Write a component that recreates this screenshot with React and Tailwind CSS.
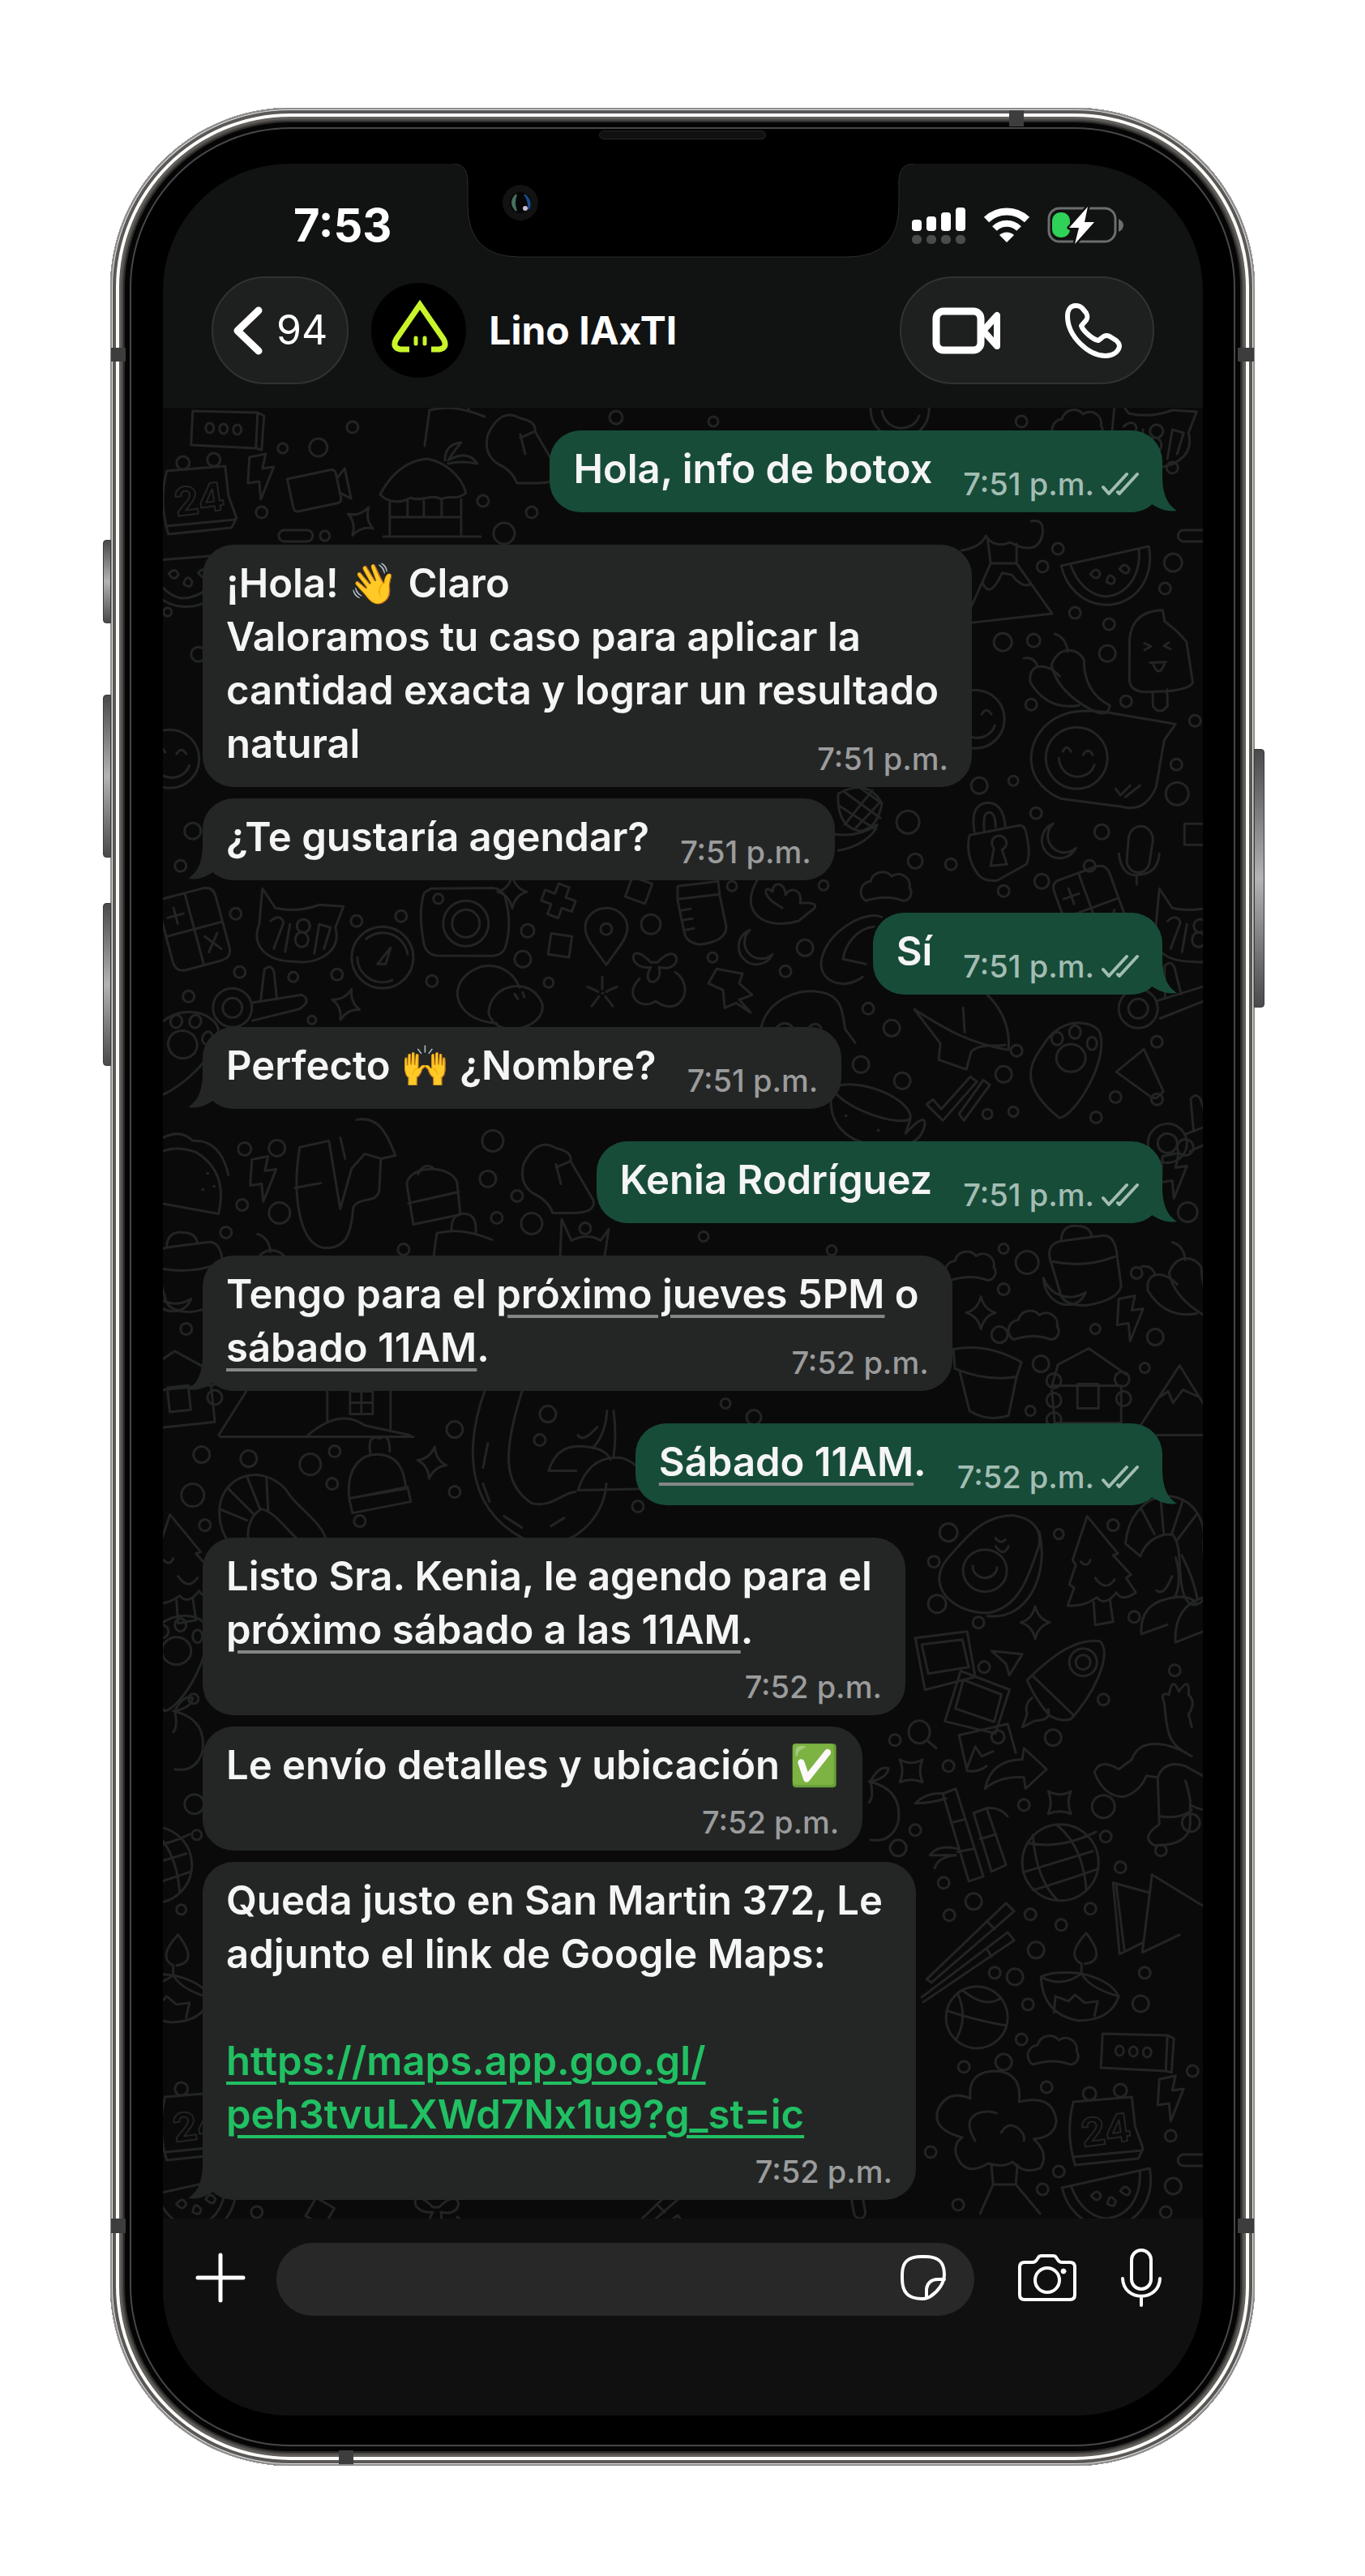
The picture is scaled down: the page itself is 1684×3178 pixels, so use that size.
const OUTLINE = { fill: "none", stroke: "currentColor", strokeLinecap: "round", strokeLinejoin: "round" };

/* ---------- Chat wallpaper ---------- */

const DOODLES = {
  bolt: "M-12 -24 L8 -28 L4 -10 L18 -12 L2 28 L0 6 L-14 8 Z",
  star: "M0 -20 Q4 -4 18 0 Q4 4 0 20 Q-4 4 -18 0 Q-4 -4 0 -20 Z",
  star4: "M-14 -14 Q0 -6 14 -14 Q8 0 14 14 Q0 8 -14 14 Q-8 0 -14 -14 Z",
  capsule: "M-14 -7 H14 A7 7 0 0 1 14 7 H-14 A7 7 0 0 1 -14 -7 Z",
  cloud: "M-26 16 A13 13 0 0 1 -20 -8 A15 15 0 0 1 6 -14 A14 14 0 0 1 28 0 A10 10 0 0 1 20 16 Q0 8 -26 16 Z",
  moon: "M-6 -22 A22 22 0 1 0 22 8 A18 18 0 0 1 -6 -22 Z",
  square: "M-13 -13 H13 V13 H-13 Z",
  cross: "M-7 -20 H7 V-7 H20 V7 H7 V20 H-7 V7 H-20 V-7 H-7 Z",
  flower: "M0 -5 V-20 M5 -2 L18 -8 M4 4 L13 16 M-4 4 L-13 16 M-5 -2 L-18 -8 M0 0 H1",
  pin: "M0 36 C-14 16 -26 4 -26 -10 A26 24 0 0 1 26 -10 C26 4 14 16 0 36 Z M-7 -8 A7 7 0 1 0 7 -8 A7 7 0 1 0 -7 -8",
  ticket: "M-42 -22 L38 -20 L36 24 L-44 20 Z M38 -20 L46 -16 L43 26 L36 24 M-26 -1 A5 6 0 1 0 -16 -1 A5 6 0 1 0 -26 -1 M-9 0 A5 6 0 1 0 1 0 A5 6 0 1 0 -9 0 M8 1 A5 6 0 1 0 18 1 A5 6 0 1 0 8 1",
  calendar: "M-40 -34 L32 -40 L36 -4 L46 24 L40 36 L-38 44 Q-50 4 -40 -34 Z M-40 34 L44 26 M-28 -44 A8 8 0 1 0 -12 -44 A8 8 0 1 0 -28 -44 M10 -48 A8 8 0 1 0 26 -48 A8 8 0 1 0 10 -48",
  camcorder: "M-36 -20 H18 Q24 -20 24 -14 V16 Q24 22 18 22 H-30 Q-36 22 -36 16 Z M24 -8 L36 -18 V20 L24 10",
  hut: "M-54 -2 C-40 -28 -20 -44 4 -46 C26 -42 46 -26 52 -4 C40 6 30 -2 22 4 C10 -4 -4 8 -16 2 C-28 8 -42 10 -54 -2 Z M-42 8 V50 H46 V4 M-42 26 H46 M-20 6 V26 M0 6 V26 M22 6 V26 M-50 50 H70 M26 -44 Q26 -64 46 -66 Q36 -54 30 -44 Q54 -58 66 -40 Q46 -44 30 -40",
  melon: "M-54 -12 L54 -36 C62 4 36 38 -2 36 C-28 34 -48 14 -54 -12 Z M-42 -12 C-34 10 -18 24 0 26 C26 24 44 2 42 -32 M-18 -2 Q-10 -12 -6 -2 Q-10 8 -18 -2 M2 8 Q4 -6 12 4 Q12 14 2 8 M18 -8 Q24 -18 30 -8 Q28 2 18 -8",
  smiley: "M-36 0 A36 36 0 1 0 36 0 A36 36 0 1 0 -36 0 M-16 -8 Q-11 -18 -6 -8 M8 -6 Q14 -16 20 -6 M-22 2 C-18 28 16 30 24 8",
  calculator: "M-26 -46 H22 Q36 -46 36 -32 V32 Q36 46 22 46 H-22 Q-36 46 -36 32 V-34 Q-36 -46 -26 -46 Z M0 -46 V46 M-36 0 H36 M-18 -32 V-12 M-28 -22 H-8 M10 12 L26 32 M26 12 L10 32",
  cat: "M-44 -44 L-28 -20 Q0 -14 26 -24 L56 -22 L46 4 C54 34 24 50 -4 46 C-40 46 -58 26 -48 0 Z M-34 -4 Q-22 -14 -18 -2 L-30 30 M-16 34 L-10 0 M6 -6 A8 8 0 1 0 7 -6 M4 10 A8 9 0 1 0 5 10 M20 36 L26 0 L40 4 L32 30",
  stopwatch: "M-38 0 A38 38 0 1 0 38 0 A38 38 0 1 0 -38 0 M-31 0 A31 31 0 0 0 12 28 M31 -4 A31 31 0 0 0 -20 -23 M-6 8 L10 -12 L4 8 Z",
  camera: "M-46 -38 L30 -44 Q42 -44 46 -34 Q58 0 50 30 Q46 40 30 40 L-32 44 Q-46 44 -50 30 Q-60 -8 -54 -32 Z M-28 2 A28 28 0 1 0 28 2 A28 28 0 1 0 -28 2 M-17 2 A17 17 0 1 0 17 2 A17 17 0 1 0 -17 2 M-42 -26 A6 6 0 1 0 -30 -26 A6 6 0 1 0 -42 -26",
  plane: "M-24 0 A24 24 0 1 0 24 0 A24 24 0 1 0 -24 0 M-12 0 A12 12 0 1 0 12 0 A12 12 0 1 0 -12 0 M24 -8 L84 -22 Q98 -16 82 -4 L26 14 M34 -10 L36 -50 Q44 -58 48 -48 L54 -14",
  stones: "M-2 34 C-60 30 -66 -22 -20 -36 C4 -40 20 -26 26 -10 M-12 22 C-12 -14 40 -26 54 10 C60 40 -2 56 -12 22 Z M20 -2 L24 4 M30 -4 L32 2",
  bow: "M-6 -10 C-34 -40 -36 0 -6 -4 C-20 20 10 20 4 -4 C36 4 30 -40 2 -10 Z M-20 10 C-40 30 -20 50 0 38 C30 60 50 20 24 2",
  paw: "M-30 -30 C-48 -6 -60 20 -10 60 C10 56 50 -10 40 -44 C34 -62 -10 -66 -30 -30 Z M-14 -14 A18 17 0 1 0 22 -14 A18 17 0 1 0 -14 -14 M-20 -38 A7 8 0 1 0 -6 -38 A7 8 0 1 0 -20 -38 M2 -46 A7 8 0 1 0 16 -46 A7 8 0 1 0 2 -46 M24 -32 A6 8 0 1 0 36 -32 A6 8 0 1 0 24 -32",
  speech: "M-50 -52 Q-30 -62 10 -56 L92 -42 L78 -22 L68 36 Q54 68 26 60 L-50 50 C-104 26 -92 -34 -50 -52 Z M-68 0 A38 38 0 1 0 8 0 A38 38 0 1 0 -68 0 M-47 -8 Q-42 -18 -37 -8 M-22 -4 Q-16 -14 -10 -4 M-52 0 C-50 28 -14 30 -8 8 M18 38 L24 46 L36 34 M30 48 L48 34",
  lock: "M-34 -14 L28 -26 Q34 -26 36 -16 Q42 10 36 22 L0 42 Q-16 44 -24 34 Q-40 12 -34 -14 Z M-28 -18 Q-34 -52 -12 -54 Q8 -54 10 -24 M-16 -20 Q-18 -42 -10 -42 Q-2 -42 -2 -24 M-4 2 A9 9 0 1 1 6 4 L12 22 L-8 24 Z",
  mic: "M-14 -14 A15 17 0 0 1 16 -12 L12 14 A13 14 0 0 1 -16 10 Z M-26 4 Q-22 34 0 30 Q22 28 24 4 M-4 30 V42",
  berry: "M-26 -30 Q10 -50 28 -18 Q22 14 0 16 Q-28 10 -26 -30 Z M-26 -16 L20 14 M-18 -32 L26 0 M0 -38 L28 -18 M16 -34 L-18 8 M26 -20 L-6 14 M-26 40 C0 36 20 20 22 8 Q0 24 -30 20",
  jar: "M-28 -34 L22 -40 L24 -22 L32 16 Q32 34 0 38 Q-18 36 -20 22 L-28 -16 Z M-28 -18 L24 -24 M-24 -4 L-12 -6 M-22 8 L-10 6 M-18 20 L-8 18",
  shell: "M-30 -28 C-56 14 -20 36 20 24 L40 8 Q44 0 22 2 C26 -14 10 -20 4 -8 C4 -24 -12 -26 -12 -12 C-20 -20 -26 -12 -12 0 L0 8",
  bulb: "M40 -44 C20 -52 -20 -30 -32 0 C-46 32 -10 50 16 30 M30 -32 C8 -30 -6 -8 -8 8 L20 14",
  pushpin: "M-18 -26 L14 -20 L10 -8 L26 6 L10 12 L24 28 L6 16 L-8 22 L-10 0 L-28 -8 Z",
  shark: "M-60 -22 C-20 4 10 20 56 28 C58 4 50 -20 30 -40 M-60 -22 L-28 20 L-30 40 L4 52 L10 30 C20 20 36 24 52 22 M0 -24 L2 6",
  ticks: "M-36 6 L-28 0 L-18 12 L18 -28 L26 -22 L-16 26 Z M4 18 L34 -24 L42 -18 L10 26 Z",
  tube: "M-34 -6 L0 -34 L24 18 L16 26 L10 26 Z M20 22 A7 7 0 1 0 22 24",
  cup: "M-60 -34 C-30 -50 40 -20 36 4 C20 14 -50 -10 -60 -34 Z M-60 -34 C-70 10 -40 36 0 36 M36 4 L30 22 Q54 -4 54 10 Q50 34 24 36 M-44 0 H-43 M-4 18 H-3",
  head: "M-56 28 C-60 -10 -10 -38 26 -24 C46 -16 44 4 48 20 L60 36 M-36 16 Q-26 8 -18 16 M2 18 Q12 8 18 18",
  backpack: "M-44 -20 Q-48 -40 -26 -42 L20 -48 Q34 -50 38 -30 L44 14 Q40 32 0 38 Q-30 38 -32 20 Z M-40 -16 Q0 -8 36 -22 M-30 -44 Q-28 -62 -10 -60 Q6 -60 8 -46 M-52 4 C-50 40 -10 48 0 22 M-52 4 C-44 26 -20 34 0 22",
  pot: "M-42 -42 Q0 -50 42 -26 L36 -8 Q0 -2 -40 -18 Z M-34 -14 L-22 34 Q0 48 26 40 L36 -8",
  cabin: "M-46 -10 L-38 -38 L0 -58 L46 -26 M-46 -12 H40 V34 H-42 Z M-52 -18 A9 9 0 1 0 -34 -18 A9 9 0 1 0 -52 -18 M-52 6 A9 9 0 1 0 -34 6 A9 9 0 1 0 -52 6 M-52 30 A9 9 0 1 0 -34 30 A9 9 0 1 0 -52 30 M32 -20 A9 9 0 1 0 50 -20 A9 9 0 1 0 32 -20 M34 4 A9 9 0 1 0 52 4 A9 9 0 1 0 34 4 M-14 -14 H12 V16 H-14 Z",
  peak: "M-56 48 L0 -38 L46 36 M-26 2 L-14 -6 L-8 8 L4 -8 L22 0 M-90 48 H60",
  volcano: "M-58 54 L-24 -22 H8 L52 40 L-56 52 M-34 2 Q-26 20 -14 -2 L-10 -10 L2 -8 Q14 8 24 4 M-24 -22 L-28 -54 M8 -22 V-46 M-60 -38 Q-36 -42 -30 -56 Q-20 -40 0 -48 Q34 -30 40 -58 Q42 -78 26 -74",
  popsicle: "M-34 -20 Q-30 -54 8 -54 L10 -40 Q26 -28 36 -14 L42 36 Q40 44 10 46 L-18 46 Q-36 44 -36 30 Z M-8 46 V64 Q0 76 10 64 V44 M-16 -14 L-8 -10 L-16 -6 M14 -14 L8 -10 L16 -6 M-10 10 H10 M-6 12 Q0 30 8 12",
  pepper: "M-16 -38 Q-2 -34 0 -16 M-20 0 C-10 -26 14 -20 20 -6 C20 30 40 44 52 50 Q50 66 30 56 C0 40 -16 20 -20 0 Z M-54 -8 Q-42 -10 -38 0 M-46 22 C-50 -2 -26 -4 -10 14 M-46 22 C-30 48 -8 54 14 50",
  taco: "M-60 -14 Q-40 -44 0 -30 Q40 -6 28 46 L-60 30 M-44 -46 Q-20 -60 -4 -44 Q30 -46 40 -2 M14 -4 H15 M8 16 H9 M22 12 H23",
  bottle: "M-60 -50 C-70 10 -60 70 -30 74 C0 76 4 50 6 24 C14 10 34 20 38 4 L40 -36 L20 -42 L4 -24 L-10 26 L-24 -58 Z M-66 0 L-34 -6 M-10 -62 L-4 -36 M10 -84 C40 -90 50 -60 58 -40 L40 -36",
  cake: "M-34 -16 C-30 -40 20 -40 28 -18 L32 22 L-26 34 Z M-32 8 L30 -6 M-20 -28 Q-14 -42 -2 -36",
  shoe: "M-40 -24 Q-24 -58 0 -44 Q20 -40 18 -28 L46 20 Q50 36 20 36 L-4 36 Q-10 20 -28 12 Q-46 0 -40 -24 Z M0 -24 L6 0 M18 -28 L0 -20",
  bag: "M-36 30 L-30 -14 Q0 -22 38 -6 M-12 -18 Q-12 -40 6 -38 Q20 -36 18 -14",
  ears: "M-26 24 L-24 -26 L-12 0 Q8 -10 24 0 L34 -14 L28 26",
  house: "M-130 30 L-96 -24 M-128 32 H110 M-20 30 Q20 -4 50 18 L106 30 M4 -24 V12 M82 -24 V22 M32 -24 H60 V4 H32 Z M46 -24 V4 M32 -10 H60",
  shrimp: "M-48 0 C-50 -44 0 -66 34 -30 C44 -10 80 10 84 34 Q80 52 62 42 C40 30 26 0 4 -6 C-8 0 -18 20 -10 40 L-34 40 Q-48 20 -48 0 Z M-48 -6 L-14 8 M-38 -32 L-6 0 M-14 -46 L2 -6 M10 -44 L12 -4",
  beanie: "M-38 22 C-42 -20 -20 -34 0 -32 C24 -30 30 -10 32 10 Z M-38 22 L34 8 L38 26 L-34 40 Z M-12 -34 Q-16 -58 0 -52 Q12 -60 12 -36",
  road: "M-30 -100 C-60 -20 -54 60 30 94 C80 100 116 60 118 20 M16 -100 C-10 -20 -10 20 26 44 C50 50 66 30 80 30 M-34 0 L-28 -30 M-34 20 L-26 42 M-8 60 L14 74 M50 72 L66 62",
  mushroom: "M-50 14 Q-40 -20 -6 -16 Q20 -14 26 0 M-50 14 H-16 M-14 38 Q0 -6 40 -2 Q66 6 76 36 Z M10 -40 Q-8 -20 -14 -30 M22 -60 Q20 -30 4 -14 M30 -60 Q34 -30 30 -4",
  avocado: "M20 -60 C-20 -60 -40 -30 -62 -6 C-90 30 -50 62 -10 60 C30 52 40 10 52 -24 Q56 -54 20 -60 Z M52 -40 C64 10 40 70 -12 64 M-42 8 A27 26 0 1 0 12 8 A27 26 0 1 0 -42 8 M-2 -32 Q4 -24 10 -30 M-2 -22 Q8 -8 14 -22 M-30 2 A15 14 0 1 0 0 4",
  tree: "M-12 -68 L26 -22 L20 -20 L42 4 L36 8 L48 26 Q30 38 24 26 Q10 44 0 32 Q-16 44 -36 42 L-28 20 L-34 16 L-26 -8 L-30 -14 Z M-4 38 L-2 66 L20 62 L16 34 M-20 -12 Q-12 -4 -8 -14 M-2 8 Q10 26 22 10",
  polaroid: "M-34 -32 L30 -40 L40 16 L-22 32 Z M-26 -24 L24 -30 L32 4 L-18 12 Z",
  picture: "M-34 -22 L26 -36 L36 0 M-34 -22 L-24 22 Q-10 24 0 16 M-24 18 L-14 -8 L-6 4 L8 -2 M6 -20 A8 8 0 1 0 22 -20 A8 8 0 1 0 6 -20",
  arrow: "M-38 26 Q-30 -10 8 -10 L10 -24 L38 2 L12 26 L10 12 Q-20 10 -38 26 Z",
  dart: "M-20 -12 L18 -8 L2 18 L-2 4 Z",
  rocket: "M-50 0 C-20 -30 10 -52 40 -48 C56 -30 30 20 4 48 Q-8 52 -22 44 Q-40 24 -50 0 Z M-42 -4 L8 44 M2 -22 A17 17 0 1 0 36 -22 A17 17 0 1 0 2 -22 M10 -22 A9 9 0 1 0 28 -22 A9 9 0 1 0 10 -22 M-44 22 Q-54 30 -50 42 L-56 58 L-40 50 Q-20 50 -24 36",
  lens: "M-14 0 A13 14 0 1 0 12 0 A13 14 0 1 0 -14 0 M8 10 L20 20",
  bamboo: "M-24 -48 L-8 -54 L26 54 L8 60 Z M-14 -12 L2 -16 M-6 24 L14 20 M-24 -48 Q-44 -50 -58 -36 Q-40 -36 -20 -42 M14 -24 L30 -30 L54 40 L36 48 Z M22 8 L42 2 M30 -30 Q46 -32 56 -20 M-6 20 Q-30 14 -40 28 L-8 28 Q-30 30 -34 44",
  globe: "M-47 0 A47 47 0 1 0 47 0 A47 47 0 1 0 -47 0 M-40 -24 Q0 -16 44 -38 M-46 12 L40 -14 M-34 34 Q0 24 46 8 M-34 -34 Q-30 20 -4 46 M-4 -46 Q28 -20 32 34",
  sticks: "M-54 50 L44 -44 L54 -34 L-48 54 Z M-60 72 L46 -8 L54 2 L-58 78 M20 -22 L30 -12 M20 12 L26 22",
  candle: "M-46 -10 Q-30 -18 4 -14 Q40 -6 50 14 Q40 44 0 44 Q-44 36 -46 -10 Z M-46 -10 Q-20 4 4 -14 Q14 4 50 14 M4 -14 V-26 Q-16 -36 10 -64 Q36 -30 8 -26 M-30 34 L-28 14 L-12 20 L-4 12 L8 22 L24 20 L20 38",
  ball: "M-38 0 A38 38 0 1 0 38 0 A38 38 0 1 0 -38 0 M-24 -30 Q-10 0 -26 28 M-36 -8 Q0 4 36 10 M-18 -34 Q10 -10 30 -24",
  dancer: "M-30 -20 C-20 -50 20 -40 44 -24 M-30 -20 L-46 -8 Q-70 -22 -76 -4 Q-64 26 -40 26 Q-20 20 -12 0 L2 2 M2 2 Q10 -20 36 -12 L76 10 M2 2 L4 60 Q-20 76 -2 86 Q40 86 42 60 V30 Q38 10 36 6 M4 50 Q30 54 44 42 M42 36 Q60 46 76 40 M44 -24 C10 -40 14 -60 10 -90 Q4 -104 16 -100 Q20 -124 28 -104 Q42 -124 40 -100 Q50 -90 40 -76 L44 -60",
  books: "M-54 -40 L-46 48 L-18 34 M-54 -40 L-10 -28 M-50 -36 L-40 44 M-6 -50 L-18 46 L28 24 M-6 -50 L56 -12",
  cherry: "M10 -30 Q20 -50 32 -46 Q30 -34 10 -30 Q14 -10 8 -4 M8 -30 Q50 -20 44 20 Q36 46 10 42",
  broccoli: "M-10 52 Q-40 70 -50 40 Q-52 26 -42 20 Q-80 10 -72 -14 Q-60 -40 -32 -28 Q-36 -62 0 -62 Q32 -60 28 -24 Q70 -34 74 0 Q72 20 46 22 Q66 40 54 58 Q34 66 20 50 Q8 58 -10 52 Z M-26 24 Q-42 -2 -22 -10 Q-10 -14 0 -10 M6 14 Q14 0 26 8 Q36 16 34 24 M-6 54 L-4 78 H24 L26 54 M-4 78 L-20 114 M24 78 L54 114",
};

const PLACED = [
  ["ticket", 280, 529], ["bolt", 320, 588], ["camcorder", 394, 603, -12], ["star", 445, 643, 30], ["hut", 523, 612],
  ["calendar", 246, 615], ["capsule", 365, 661], ["melon", 226, 712, 8], ["smiley", 210, 936], ["calculator", 240, 1146, -15],
  ["cat", 368, 1140], ["stopwatch", 472, 1181], ["camera", 575, 1137, 4], ["star", 632, 1100], ["cross", 689, 1111, 20],
  ["pin", 748, 1154], ["square", 691, 1166, 8], ["square", 788, 1098, 20], ["plane", 287, 1243, 4], ["star", 427, 1239, 20],
  ["stones", 615, 1228], ["flower", 743, 1225], ["bow", 809, 1197], ["paw", 217, 1300, 20],
  ["volcano", 1246, 717], ["melon", 1363, 710], ["popsicle", 1428, 807, -2], ["pepper", 1317, 820], ["smiley", 1203, 887],
  ["speech", 1358, 935], ["lock", 1230, 1044], ["moon", 1305, 1038], ["mic", 1406, 1049], ["square", 1474, 1029],
  ["berry", 1060, 1009], ["cloud", 1094, 1095], ["jar", 864, 1127], ["shell", 965, 1112], ["moon", 931, 1169],
  ["bulb", 1048, 1175], ["pushpin", 902, 1221], ["cat", 1474, 1140], ["calculator", 1346, 1120, -20], ["head", 995, 1250],
  ["shark", 1188, 1267], ["paw", 1317, 1319], ["ticks", 1179, 1356], ["tube", 1411, 1328], ["plane", 1404, 1244, -4],
  ["cup", 1087, 1376], ["plane", 1440, 1410, -8], ["bolt", 1446, 1450], ["backpack", 1339, 1572], ["cloud", 1198, 1563],
  ["star", 1210, 1619], ["cloud", 1276, 1636], ["bolt", 1392, 1626], ["pot", 1218, 1706], ["cabin", 1343, 1721],
  ["peak", 1455, 1722], ["pepper", 1462, 1570], ["taco", 242, 1451], ["bolt", 323, 1454], ["bottle", 430, 1465],
  ["cake", 536, 1476], ["shoe", 686, 1460], ["bag", 569, 1535], ["ears", 717, 1530], ["backpack", 236, 1580],
  ["pepper", 334, 1560], ["cabin", 222, 1724, -6], ["house", 400, 1740], ["shrimp", 319, 1867], ["beanie", 469, 1826],
  ["star", 533, 1804, 10], ["road", 630, 1810], ["mushroom", 727, 1800], ["tree", 222, 1936], ["paw", 214, 2050],
  ["cherry", 206, 2140], ["globe", 190, 2300], ["candle", 210, 2450], ["calendar", 244, 2620], ["melon", 236, 2720],
  ["avocado", 1230, 1929], ["tree", 1353, 1938], ["star", 1277, 2001], ["polaroid", 1163, 2052], ["polaroid", 1200, 2105, 28],
  ["picture", 1217, 2162], ["arrow", 1253, 2180], ["dart", 1243, 2048], ["rocket", 1317, 2072], ["lens", 1135, 2136],
  ["star4", 1124, 2184], ["star4", 1307, 2223], ["bamboo", 1187, 2260], ["globe", 1308, 2297], ["sticks", 1197, 2391],
  ["candle", 1330, 2448], ["ball", 1205, 2488], ["dancer", 1426, 2190], ["books", 1427, 2362], ["cherry", 1064, 2227],
  ["mushroom", 1450, 1985, -20], ["shrimp", 1440, 1895, 40], ["broccoli", 1229, 2616], ["cloud", 1300, 2530],
  ["ticket", 1402, 2530], ["calendar", 1364, 2626], ["bolt", 1442, 2588], ["melon", 1364, 2710], ["capsule", 1474, 2664],
  ["capsule", 1474, 661], ["cloud", 1330, 525], ["bag", 560, 520], ["shoe", 642, 560], ["smiley", 1110, 505],
  ["square", 395, 2728, 30], ["bow", 540, 2732], ["sticks", 790, 2740], ["capsule", 1058, 2715, 80], ["cat", 1420, 530],
];

const DOTS = [
  [349, 553, 6], [393, 552, 11], [323, 632, 7], [401, 661, 6], [435, 527, 7], [596, 618, 7], [656, 632, 7], [622, 658, 13],
  [207, 755, 5], [245, 807, 9], [238, 1025, 10], [223, 1068, 7], [291, 1127, 7], [440, 1136, 7], [495, 1130, 7], [651, 1148, 8],
  [803, 1140, 12], [645, 1183, 10], [296, 1199, 7], [362, 1205, 6], [416, 1202, 7], [533, 1210, 7], [677, 1212, 6], [233, 1229, 7],
  [385, 1258, 5], [1120, 1014, 14], [1129, 1062, 9], [1173, 1066, 7], [1278, 1003, 7], [1250, 963, 6], [1208, 969, 10],
  [1451, 943, 7], [1452, 979, 14], [1359, 1026, 9], [1344, 1068, 7], [1285, 1087, 9], [1238, 1099, 7], [1016, 1092, 6],
  [903, 1093, 6], [993, 1169, 10], [879, 1181, 6], [969, 1198, 7], [1071, 1244, 7], [1100, 1268, 10], [1062, 1313, 10],
  [1113, 1333, 10], [1254, 1296, 7], [1238, 1325, 10], [1218, 1374, 6], [1250, 1371, 6], [1376, 1353, 7], [1352, 1378, 7],
  [1427, 1285, 7], [1462, 1415, 10], [1465, 1495, 12], [1267, 1557, 14], [1238, 1590, 7], [1233, 1646, 10], [1351, 1639, 6],
  [1425, 1649, 10], [1402, 1570, 7], [1284, 1682, 10], [1412, 1687, 6], [1271, 1740, 6], [895, 1731, 6], [930, 1748, 9],
  [1238, 1540, 6], [1026, 1542, 6], [868, 1525, 6], [302, 1417, 8], [342, 1416, 10], [299, 1486, 7], [345, 1496, 13],
  [279, 1520, 7], [602, 1454, 10], [608, 1407, 13], [638, 1475, 7], [613, 1502, 7], [656, 1509, 13], [722, 1515, 7],
  [498, 1541, 7], [230, 1639, 7], [249, 1794, 10], [307, 1799, 10], [383, 1806, 13], [413, 1790, 7], [410, 1830, 7],
  [238, 1844, 14], [253, 1881, 7], [561, 1763, 10], [561, 1840, 7], [444, 1876, 7], [676, 1744, 10], [666, 1776, 7],
  [787, 1858, 7], [1305, 677, 7], [1286, 699, 7], [1447, 694, 11], [1437, 726, 7], [1326, 756, 7],
  [1368, 770, 7], [1366, 806, 10], [1237, 792, 11], [1275, 790, 8], [1272, 869, 7], [1389, 865, 7], [1474, 889, 7],
  [1170, 1890, 11], [1152, 1926, 7], [1306, 1892, 6], [1373, 1881, 7], [1156, 1978, 11], [1207, 2001, 7], [1399, 1994, 7],
  [1214, 2056, 7], [1449, 2060, 7], [1361, 2096, 7], [1299, 2143, 10], [1104, 2146, 7], [1170, 2178, 7], [1263, 2226, 7],
  [1361, 2228, 14], [1364, 2265, 7], [1469, 2248, 11], [1432, 2282, 7], [1382, 2303, 7], [1129, 2257, 7], [1108, 2279, 10],
  [1164, 2322, 7], [1201, 2345, 10], [1171, 2362, 7], [1271, 2361, 7], [1309, 2374, 7], [1345, 2354, 7], [1278, 2405, 10],
  [1252, 2438, 10], [1227, 2433, 7], [1268, 2472, 7], [1412, 2433, 7], [1407, 2471, 10], [1260, 2515, 7], [1238, 2543, 10],
  [1189, 2549, 7], [1291, 2574, 7], [1471, 2554, 7], [1444, 2634, 7], [1148, 2654, 7], [1306, 2678, 7], [1286, 2700, 7],
  [1447, 2696, 10], [1438, 2728, 7], [1182, 2719, 7], [239, 2095, 6], [240, 2225, 12], [243, 2263, 6], [224, 2355, 6],
  [317, 2728, 7], [1446, 577, 7], [1260, 520, 7], [880, 520, 6], [760, 515, 8],
];

const CALENDARS = [[246, 615], [1364, 2626], [244, 2620]];

function Wallpaper() {
  return (
    <svg
      viewBox="201 503 1283 2233"
      preserveAspectRatio="xMidYMin slice"
      className="pointer-events-none absolute inset-0 h-full w-full text-[#232424]"
      aria-hidden="true"
      strokeWidth="3"
      {...OUTLINE}
    >
      {PLACED.map(([name, x, y, turn = 0], i) => (
        <path key={i} d={DOODLES[name]} transform={`translate(${x} ${y}) rotate(${turn})`} />
      ))}
      {DOTS.map(([x, y, r], i) => (
        <circle key={i} cx={x} cy={y} r={r} />
      ))}
      {CALENDARS.map(([x, y], i) => (
        <text key={i} x={x} y={y + 18} textAnchor="middle" fontSize="48" fontWeight="700" strokeWidth="2" transform={`rotate(-8 ${x} ${y})`}>
          24
        </text>
      ))}
    </svg>
  );
}

/* ---------- Icons ---------- */

function SignalIcon() {
  return (
    <svg width="68" height="46" viewBox="0 0 68 46" aria-label="Señal" role="img">
      <g fill="#fff">
        <rect x="1" y="16" width="12" height="14" rx="4" />
        <rect x="19" y="12" width="12" height="18" rx="4" />
        <rect x="37" y="7" width="12" height="23" rx="4" />
        <rect x="55" y="1" width="12" height="29" rx="4" />
      </g>
      <g fill="#4a4b4b">
        <rect x="1" y="35" width="12" height="11" rx="5" />
        <rect x="19" y="35" width="12" height="11" rx="5" />
        <rect x="37" y="35" width="12" height="11" rx="5" />
        <rect x="55" y="35" width="12" height="11" rx="5" />
      </g>
    </svg>
  );
}

function WifiIcon() {
  return (
    <svg width="58" height="44" viewBox="0 0 58 44" aria-label="Wi-Fi" role="img">
      <path d="M4 15 A36 36 0 0 1 54 15" fill="none" stroke="#fff" strokeWidth="9" />
      <path d="M14 26 A21 21 0 0 1 44 26" fill="none" stroke="#fff" strokeWidth="8" />
      <path d="M29 43 L20 34 A13 13 0 0 1 38 34 Z" fill="#fff" />
    </svg>
  );
}

function BatteryIcon() {
  return (
    <svg width="95" height="46" viewBox="0 0 95 46" aria-label="Batería cargando" role="img">
      <rect x="2" y="2" width="82" height="41" rx="13" fill="none" stroke="#6c6d6d" strokeWidth="3" />
      <path d="M88 15 Q94 18 94 23 Q94 28 88 31 Z" fill="#6c6d6d" />
      <rect x="6" y="7" width="22" height="31" rx="10" fill="#30d158" />
      <path d="M50 0 L27 26 H39 L34 46 L58 19 H46 Z" fill="#fff" stroke="#111" strokeWidth="5" paintOrder="stroke" strokeLinejoin="round" />
    </svg>
  );
}

function BackIcon() {
  return (
    <svg width="38" height="60" viewBox="0 0 38 60" strokeWidth="9" aria-hidden="true" {...OUTLINE}>
      <path d="M32 5 L6 30 L32 55" />
    </svg>
  );
}

function BrandMark() {
  return (
    <svg viewBox="0 0 117 117" className="size-[117px] shrink-0 rounded-full bg-black text-[#c9f52b]" strokeWidth="7" role="img" aria-label="Lino IAxTI" {...OUTLINE}>
      <path strokeLinecap="butt" strokeLinejoin="miter" d="M47 82 H36 Q25 80 31 69 L60 27 L89 69 Q95 80 84 82 H74" />
      <path d="M55 68 V75 M66 68 V75" strokeWidth="5" />
    </svg>
  );
}

function VideoIcon() {
  return (
    <svg width="86" height="58" viewBox="0 0 86 58" strokeWidth="9" aria-hidden="true" {...OUTLINE}>
      <rect x="5" y="5" width="55" height="48" rx="9" />
      <path d="M63 29 L80 10 V48 Z" strokeWidth="8" />
    </svg>
  );
}

function PhoneIcon() {
  return (
    <svg width="70" height="68" viewBox="0 0 70 68" strokeWidth="6" aria-hidden="true" {...OUTLINE}>
      <path d="M13 3 C7 3 3 8 3 16 C3 41 29 65 50 65 C59 65 66 60 67 53 C67 50 66 49 63 46 L55 41 C51 39 48 40 45 43 L41 46 C34 45 22 34 20 28 L26 21 C28 18 28 16 26 12 L21 6 C19 4 16 3 13 3 Z" />
    </svg>
  );
}

function ReadTicks() {
  return (
    <svg width="46" height="30" viewBox="0 0 46 30" strokeWidth="4" role="img" aria-label="Entregado" {...OUTLINE}>
      <path d="M2 19 L9 27 L31 3 M20 25 L22 27 L44 3" />
    </svg>
  );
}

function PlusIcon() {
  return (
    <svg width="62" height="62" viewBox="0 0 62 62" strokeWidth="5" aria-hidden="true" {...OUTLINE}>
      <path d="M3 31 H59 M31 3 V59" />
    </svg>
  );
}

function StickerIcon() {
  return (
    <svg width="58" height="58" viewBox="0 0 58 58" strokeWidth="4" aria-hidden="true" {...OUTLINE}>
      <path d="M28 55 C10 55 3 47 3 30 V25 C3 10 10 3 26 3 H32 C48 3 55 10 55 25 C55 36 47 46 38 52 Q34 55 28 55 Z M55 31 H47 C38 31 33 37 33 45 V54" />
    </svg>
  );
}

function CameraIcon() {
  return (
    <svg width="72" height="58" viewBox="0 0 72 58" strokeWidth="4" aria-hidden="true" {...OUTLINE}>
      <path d="M8 10 H18 Q21 10 23 7 L25 4 Q26 2 29 2 H43 Q46 2 47 4 L49 7 Q51 10 54 10 H64 Q70 10 70 16 V50 Q70 56 64 56 H8 Q2 56 2 50 V16 Q2 10 8 10 Z" />
      <circle cx="36" cy="32" r="15" />
      <circle cx="56" cy="21" r="3" fill="currentColor" strokeWidth="1" />
    </svg>
  );
}

function MicIcon() {
  return (
    <svg width="50" height="73" viewBox="0 0 50 73" strokeWidth="4" aria-hidden="true" {...OUTLINE}>
      <rect x="13" y="2" width="24" height="48" rx="12" />
      <path d="M2 37 C3 66 47 66 48 37 M25 59 V70" />
    </svg>
  );
}

/* ---------- Messages ---------- */

function Tail({ mine }) {
  return mine ? (
    <svg width="56" height="46" viewBox="-38 -45 56 46" className="absolute -right-[18px] bottom-0 text-[#174c39]" aria-hidden="true">
      <path fill="currentColor" d="M0 -45 C0 -25 4 -10 18 -1 C5 1 -5 -4 -13 -9 C-18 -3 -28 0 -38 1 V-45 Z" />
    </svg>
  ) : (
    <svg width="56" height="46" viewBox="-18 -45 56 46" className="absolute -left-[18px] bottom-0 text-[#242626]" aria-hidden="true">
      <path fill="currentColor" d="M0 -45 C0 -25 -4 -10 -18 -1 C-5 1 5 -4 13 -9 C18 -3 28 0 38 1 V-45 Z" />
    </svg>
  );
}

function DateLink({ children }) {
  return (
    <a href="#calendario" className="underline decoration-[#858787] decoration-4 underline-offset-8">
      {children}
    </a>
  );
}

const BODY_LAYOUT = {
  inline: "flex items-end gap-[38px]",
  corner: "grid",
  stacked: "flex flex-col",
};
const TEXT_LAYOUT = {
  inline: "mb-[9px]",
  corner: "col-start-1 row-start-1 mb-[9px] pr-3",
  stacked: "mb-[13px]",
};
const TIME_LAYOUT = {
  inline: "",
  corner: "col-start-1 row-start-1 self-end justify-self-end",
  stacked: "self-end",
};

function Message({ mine, time, layout = "inline", tail, close, roomy, children }) {
  return (
    <li className={(mine ? "self-end " : "self-start ") + (close ? "mt-[14px]" : "mt-[40px] first:mt-0")}>
      <div className={"relative rounded-[38px] px-[29px] pt-[15px] pb-[11px] " + (mine ? "bg-[#174c39] " : "bg-[#242626] ") + BODY_LAYOUT[layout]}>
        {tail && <Tail mine={mine} />}
        <p className={"relative text-[49px] leading-[66px] font-semibold whitespace-nowrap text-[#f5f5f5] " + (roomy ? "pr-3 " : "") + TEXT_LAYOUT[layout]}>{children}</p>
        <div className={"relative flex items-center gap-[9px] text-[38px] leading-[48px] font-medium whitespace-nowrap " + (mine ? "text-[#a3bdb3] " : "text-[#9b9c9c] ") + TIME_LAYOUT[layout]}>
          <time>{time}</time>
          {mine && <ReadTicks />}
        </div>
      </div>
    </li>
  );
}

function Conversation() {
  return (
    <main className="relative bg-[#0a0a0a] pt-[28px] pr-[50px] pb-[23px] pl-[49px]">
      <Wallpaper />
      <ol className="relative flex flex-col">
        <Message mine tail time="7:51 p.m.">Hola, info de botox</Message>
        <Message layout="corner" time="7:51 p.m.">
          ¡Hola! 👋 Claro<br />
          Valoramos tu caso para aplicar la<br />
          cantidad exacta y lograr un resultado<br />
          natural
        </Message>
        <Message close tail time="7:51 p.m.">¿Te gustaría agendar?</Message>
        <Message mine tail time="7:51 p.m.">Sí</Message>
        <Message tail time="7:51 p.m.">Perfecto 🙌 ¿Nombre?</Message>
        <Message mine tail time="7:51 p.m.">Kenia Rodríguez</Message>
        <Message layout="corner" tail time="7:52 p.m.">
          Tengo para el <DateLink>próximo jueves 5PM</DateLink> o<br />
          <DateLink>sábado 11AM</DateLink>.
        </Message>
        <Message mine tail time="7:52 p.m."><DateLink>Sábado 11AM</DateLink>.</Message>
        <Message layout="stacked" roomy time="7:52 p.m.">
          Listo Sra. Kenia, le agendo para el<br />
          <DateLink>próximo sábado a las 11AM</DateLink>.
        </Message>
        <Message close layout="stacked" time="7:52 p.m.">Le envío detalles y ubicación ✅</Message>
        <Message close tail layout="stacked" roomy time="7:52 p.m.">
          Queda justo en San Martin 372, Le<br />
          adjunto el link de Google Maps:<br />
          <br />
          <a href="https://maps.app.goo.gl/peh3tvuLXWd7Nx1u9?g_st=ic" className="text-[#21c063] underline decoration-4 underline-offset-8">
            https://maps.app.goo.gl/<br />
            peh3tvuLXWd7Nx1u9?g_st=ic
          </a>
        </Message>
      </ol>
    </main>
  );
}

/* ---------- Screen bars ---------- */

function StatusBar() {
  return (
    <div className="flex h-[139px] items-start justify-between pt-[43px] pr-[97px] pl-[161px]">
      <time className="text-[56px] leading-[66px] font-bold text-white">7:53</time>
      <div className="flex h-[66px] items-center gap-[21px]">
        <SignalIcon />
        <WifiIcon />
        <BatteryIcon />
      </div>
    </div>
  );
}

function ChatHeader() {
  return (
    <header className="flex items-center pr-[60px] pb-[29px] pl-[60px] text-white">
      <button type="button" aria-label="Atrás, 94 chats" className="flex h-[133px] items-center gap-[16px] rounded-[66px] border-2 border-[#313232] bg-[#1e1f1f] pr-[24px] pl-[24px] text-[50px]">
        <BackIcon />
        94
      </button>
      <div className="ml-[28px] flex flex-1 items-center gap-[28px]">
        <BrandMark />
        <h1 className="text-[48px] leading-[60px] font-bold whitespace-nowrap">Lino IAxTI</h1>
      </div>
      <div className="flex h-[133px] items-center gap-[78px] rounded-[66px] border-2 border-[#313333] bg-[#1e2020] px-[38px]">
        <button type="button" aria-label="Videollamada"><VideoIcon /></button>
        <button type="button" aria-label="Llamada"><PhoneIcon /></button>
      </div>
    </header>
  );
}

function Composer() {
  return (
    <footer className="flex items-start bg-[#101010] pt-[30px] pr-[51px] pb-[123px] pl-[40px] text-white">
      <button type="button" aria-label="Adjuntar" className="flex h-[86px] items-center"><PlusIcon /></button>
      <div className="ml-[38px] flex h-[90px] flex-1 items-center rounded-full bg-[#282828] pr-[34px] pb-1 pl-[36px]">
        <input type="text" aria-label="Mensaje" className="min-w-0 flex-1 bg-transparent text-[46px] outline-none" />
        <button type="button" aria-label="Stickers"><StickerIcon /></button>
      </div>
      <button type="button" aria-label="Cámara" className="ml-[54px] flex h-[86px] items-center"><CameraIcon /></button>
      <button type="button" aria-label="Nota de voz" className="ml-[55px] flex h-[86px] items-center"><MicIcon /></button>
    </footer>
  );
}

/* ---------- Device ---------- */

function Notch() {
  return (
    <svg width="570" height="117" viewBox="0 0 570 117" className="absolute top-0 left-1/2 -translate-x-1/2" aria-hidden="true">
      <path d="M0 0 Q19 0 19 22 V51 Q19 115 83 115 H487 Q551 115 551 51 V22 Q551 0 570 0" fill="#000" stroke="#2c2c2c" strokeWidth="1" />
      <circle cx="84" cy="48" r="22" fill="#121212" />
      <circle cx="84" cy="48" r="13" fill="#060606" />
      <path d="M79 38 Q69 48 79 58 Q75 48 79 38" fill="#47705f" stroke="#47705f" strokeWidth="2" />
      <path d="M89 38 Q99 46 94 56 Q95 46 89 38" fill="#1a4a8a" stroke="#1a4a8a" strokeWidth="2" />
      <circle cx="90" cy="55" r="3" fill="#c4bdd6" />
    </svg>
  );
}

function FrameDetails() {
  const key = "absolute border border-[#3a3a3a] bg-linear-to-b from-[#4a4a4a] via-[#b4b4b4] to-[#4a4a4a] ";
  const band = "absolute bg-[#3d3d3d] ";
  return (
    <div aria-hidden="true">
      <span className={key + "top-[533px] -left-[9px] h-[103px] w-[10px] rounded-l-[4px]"} />
      <span className={key + "top-[724px] -left-[9px] h-[201px] w-[10px] rounded-l-[4px]"} />
      <span className={key + "top-[981px] -left-[9px] h-[201px] w-[10px] rounded-l-[4px]"} />
      <span className={key + "top-[791px] -right-[12px] h-[319px] w-[13px] rounded-r-[4px]"} />
      <span className={band + "top-[296px] left-px h-[17px] w-[18px]"} />
      <span className={band + "top-[296px] right-px h-[17px] w-[20px]"} />
      <span className={band + "bottom-[287px] left-px h-[18px] w-[18px]"} />
      <span className={band + "right-px bottom-[287px] h-[18px] w-[20px]"} />
      <span className={band + "top-[3px] right-[285px] h-[20px] w-[18px]"} />
      <span className={band + "bottom-[2px] left-[282px] h-[17px] w-[18px]"} />
      <span className="absolute top-[28px] left-1/2 h-[11px] w-[206px] -translate-x-1/2 rounded-full border border-[#262626] bg-[#111]" />
    </div>
  );
}

export default function App() {
  return (
    <div className="flex justify-center bg-white px-[60px] pt-[133px] pb-[137px] font-['Inter','Noto_Color_Emoji',sans-serif]">
      <div className="relative w-full max-w-[1412px] rounded-[222px] bg-black pt-[69px] pr-[64px] pb-[62px] pl-[65px] shadow-[inset_0_0_0_2px_#8c8c8c,inset_0_0_0_3px_#e2e2e2,inset_0_0_0_7px_#5a5755,inset_0_0_0_11px_#fbfbf9,inset_0_0_0_14px_#625f5b,inset_0_0_0_16px_#4a4845,inset_0_0_0_18px_#2b2a29,inset_0_0_0_24px_#050505,inset_0_0_0_26px_#474747]">
        <FrameDetails />
        <div className="relative overflow-hidden rounded-[156px] bg-[#111212]">
          <Notch />
          <StatusBar />
          <ChatHeader />
          <Conversation />
          <Composer />
        </div>
      </div>
    </div>
  );
}
